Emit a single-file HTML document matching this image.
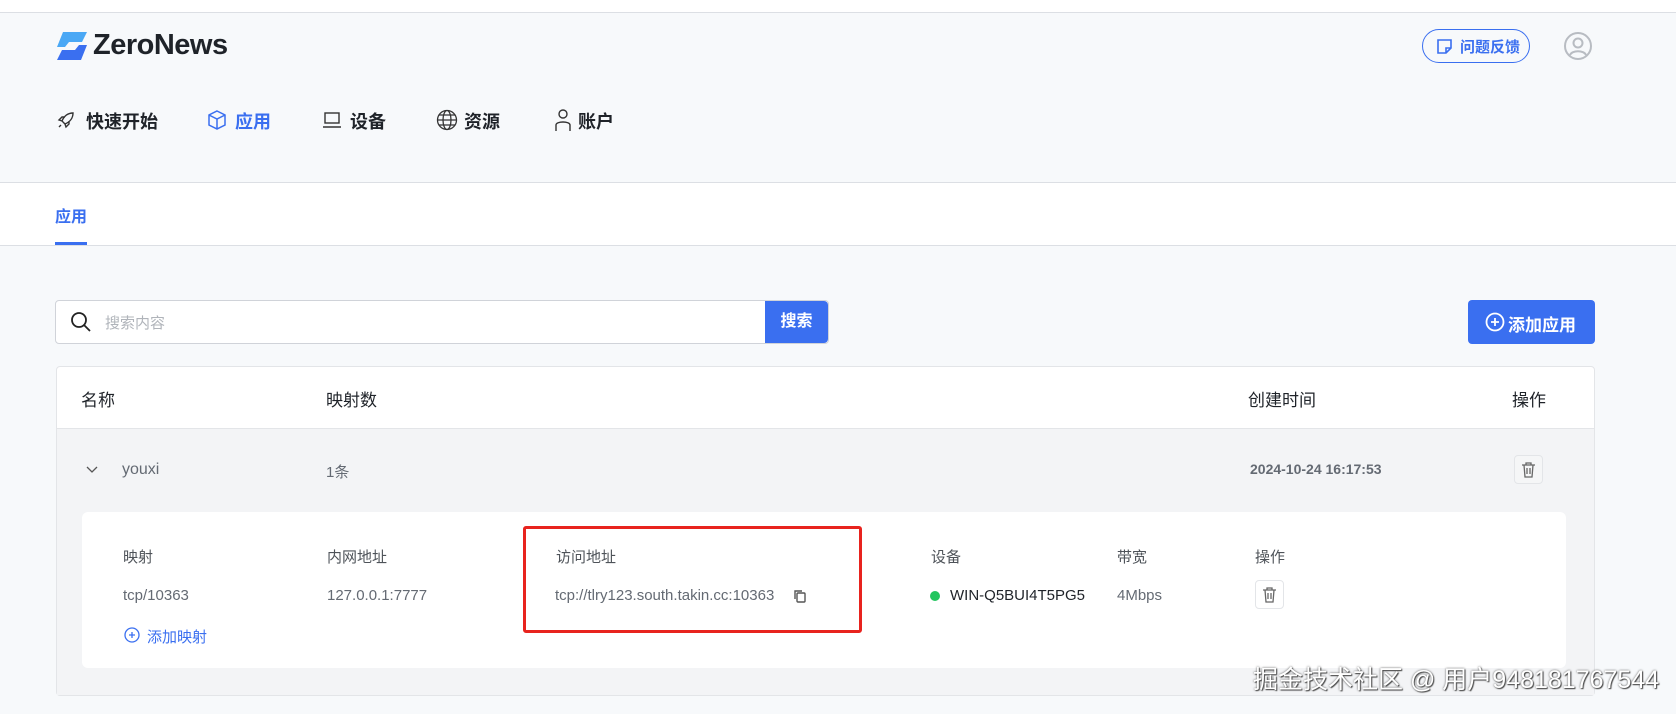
<!DOCTYPE html>
<html><head><meta charset="utf-8"><style>
*{margin:0;padding:0;box-sizing:border-box}
body{width:1676px;height:714px;overflow:hidden;background:#f7f9fb;font-family:"Liberation Sans","Noto Sans CJK SC",sans-serif;position:relative;color:#1f2329}
.a{position:absolute;white-space:nowrap}
.line{position:absolute;left:0;width:1676px;height:1px;background:#dcdfe4}
.nav{font-size:18px;font-weight:bold;top:108px;color:#1f2329}
.h{font-size:17px;color:#1f2329}
.g{font-size:15px;color:#646a73}
.ih{font-size:15px;color:#4e5359}
</style></head><body>
<div class="a" style="left:0;top:0;width:1676px;height:12px;background:#fff"></div>
<div class="line" style="top:12px"></div>
<svg class="a" style="left:55px;top:32px" width="34" height="28" viewBox="0 0 34 28">
<path d="M8 0H32L27 10H14L10 15H2Z" fill="#4aa8f5"/>
<path d="M24 13H32L26 28H2L7 18H20Z" fill="#3a6ff0"/>
</svg>
<div class="a" style="left:93px;top:29px;font-size:29px;font-weight:bold;color:#1f2329;letter-spacing:-0.5px">ZeroNews</div>
<div class="a" style="left:1422px;top:29px;width:108px;height:34px;border:1px solid #3a6ff0;border-radius:17px"></div>
<svg class="a" style="left:1436px;top:38px" width="17" height="17" viewBox="0 0 17 17" fill="none" stroke="#3a6ff0" stroke-width="1.6"><path d="M2 2H15V10L10 15H2Z M15 10H10V15"/></svg>
<div class="a" style="left:1460px;top:36px;font-size:15px;color:#3a6ff0;font-weight:bold">问题反馈</div>
<svg class="a" style="left:1563px;top:31px" width="30" height="30" viewBox="0 0 30 30" fill="none" stroke="#b8bcc2" stroke-width="2"><circle cx="15" cy="15" r="13"/><circle cx="15" cy="12" r="4.5"/><path d="M7 24C9 19 21 19 23 24"/></svg>
<svg class="a" style="left:56px;top:110px" width="20" height="20" viewBox="0 0 20 20" fill="none" stroke="#333" stroke-width="1.4"><path d="M17 3C12 3 8 6 6 11L9 14C14 12 17 8 17 3Z M6 11L3 10L6 7H9 M9 14L10 17L13 14V11 M5 15L3 17"/></svg>
<div class="a nav" style="left:86px">快速开始</div>
<svg class="a" style="left:207px;top:109px" width="20" height="22" viewBox="0 0 20 22" fill="none" stroke="#3a6ff0" stroke-width="1.5"><path d="M10 2L18 6V16L10 20L2 16V6Z M2 6L10 10L18 6 M10 10V20"/></svg>
<div class="a nav" style="left:235px;color:#3a6ff0">应用</div>
<svg class="a" style="left:322px;top:111px" width="20" height="18" viewBox="0 0 20 18" fill="none" stroke="#333" stroke-width="1.4"><rect x="3" y="2" width="14" height="10"/><path d="M1 16H19"/></svg>
<div class="a nav" style="left:350px">设备</div>
<svg class="a" style="left:436px;top:109px" width="22" height="22" viewBox="0 0 22 22" fill="none" stroke="#333" stroke-width="1.3"><circle cx="11" cy="11" r="9.5"/><ellipse cx="11" cy="11" rx="4" ry="9.5"/><path d="M1.5 11H20.5 M3 6H19 M3 16H19"/></svg>
<div class="a nav" style="left:464px">资源</div>
<svg class="a" style="left:554px;top:108px" width="18" height="24" viewBox="0 0 18 24" fill="none" stroke="#333" stroke-width="1.4"><circle cx="9" cy="6" r="4"/><path d="M2 23V17C2 13 16 13 16 17V23"/></svg>
<div class="a nav" style="left:578px">账户</div>
<div class="line" style="top:182px"></div>
<div class="a" style="left:0;top:183px;width:1676px;height:62px;background:#fff"></div>
<div class="a" style="left:55px;top:203px;font-size:16px;color:#3a6ff0;font-weight:bold">应用</div>
<div class="a" style="left:55px;top:242px;width:32px;height:3px;background:#3a6ff0"></div>
<div class="line" style="top:245px"></div>
<div class="a" style="left:55px;top:300px;width:774px;height:44px;background:#fff;border:1px solid #d0d3d9;border-radius:4px"></div>
<svg class="a" style="left:70px;top:311px" width="22" height="22" viewBox="0 0 22 22" fill="none" stroke="#222" stroke-width="1.8"><circle cx="9" cy="9" r="7"/><path d="M14 14L20 20"/></svg>
<div class="a" style="left:105px;top:312px;font-size:15px;color:#b0b4ba">搜索内容</div>
<div class="a" style="left:765px;top:301px;width:63px;height:42px;background:#3a6ff0;border-radius:0 4px 4px 0;color:#fff;font-size:16px;font-weight:bold;text-align:center;line-height:42px">搜索</div>
<div class="a" style="left:1468px;top:300px;width:127px;height:44px;background:#3a6ff0;border-radius:4px"></div>
<svg class="a" style="left:1485px;top:312px" width="20" height="20" viewBox="0 0 20 20" fill="none" stroke="#fff" stroke-width="1.8"><circle cx="10" cy="10" r="8.5"/><path d="M10 6V14 M6 10H14"/></svg>
<div class="a" style="left:1508px;top:311px;font-size:17px;font-weight:bold;color:#fff">添加应用</div>
<div class="a" style="left:56px;top:366px;width:1539px;height:330px;background:#fff;border:1px solid #e3e5e8;border-radius:4px"></div>
<div class="a" style="left:57px;top:428px;width:1537px;height:1px;background:#e3e5e8"></div>
<div class="a" style="left:57px;top:429px;width:1537px;height:266px;background:#f3f4f6"></div>
<div class="a h" style="left:81px;top:386px">名称</div>
<div class="a h" style="left:326px;top:386px">映射数</div>
<div class="a h" style="left:1248px;top:386px">创建时间</div>
<div class="a h" style="left:1512px;top:386px">操作</div>
<svg class="a" style="left:85px;top:465px" width="14" height="10" viewBox="0 0 14 10" fill="none" stroke="#555" stroke-width="1.3"><path d="M2 2L7 7L12 2"/></svg>
<div class="a g" style="left:122px;top:461px;font-size:16px">youxi</div>
<div class="a g" style="left:326px;top:461px">1条</div>
<div class="a g" style="left:1250px;top:461px;font-weight:bold;font-size:14px">2024-10-24 16:17:53</div>
<div class="a" style="left:1514px;top:455px;width:29px;height:29px;border:1px solid #e3e5e8;border-radius:4px;background:#f5f6f7"></div>
<svg class="a" style="left:1521px;top:462px" width="15" height="16" viewBox="0 0 15 16" fill="none" stroke="#666" stroke-width="1.3"><path d="M1 3H14 M5 3V1H10V3 M3 3L4 15H11L12 3 M6 6V12 M9 6V12"/></svg>
<div class="a" style="left:82px;top:512px;width:1484px;height:156px;background:#fff;border-radius:6px"></div>
<div class="a ih" style="left:123px;top:546px">映射</div>
<div class="a ih" style="left:327px;top:546px">内网地址</div>
<div class="a ih" style="left:556px;top:546px">访问地址</div>
<div class="a ih" style="left:931px;top:546px">设备</div>
<div class="a ih" style="left:1117px;top:546px">带宽</div>
<div class="a ih" style="left:1255px;top:546px">操作</div>
<div class="a g" style="left:123px;top:587px">tcp/10363</div>
<div class="a g" style="left:327px;top:587px">127.0.0.1:7777</div>
<div class="a g" style="left:555px;top:587px">tcp://tlry123.south.takin.cc:10363</div>
<svg class="a" style="left:793px;top:589px" width="14" height="15" viewBox="0 0 14 15" fill="none" stroke="#555" stroke-width="1.4"><rect x="4" y="4" width="8" height="9" rx="1"/><path d="M2 10V2H9"/></svg>
<div class="a" style="left:930px;top:591px;width:10px;height:10px;border-radius:50%;background:#22c55e"></div>
<div class="a" style="left:950px;top:587px;font-size:15px;color:#1f2329">WIN-Q5BUI4T5PG5</div>
<div class="a g" style="left:1117px;top:587px">4Mbps</div>
<div class="a" style="left:1255px;top:580px;width:29px;height:29px;border:1px solid #e3e5e8;border-radius:4px;background:#fff"></div>
<svg class="a" style="left:1262px;top:587px" width="15" height="16" viewBox="0 0 15 16" fill="none" stroke="#666" stroke-width="1.3"><path d="M1 3H14 M5 3V1H10V3 M3 3L4 15H11L12 3 M6 6V12 M9 6V12"/></svg>
<svg class="a" style="left:124px;top:627px" width="16" height="16" viewBox="0 0 16 16" fill="none" stroke="#3a6ff0" stroke-width="1.3"><circle cx="8" cy="8" r="7"/><path d="M8 5V11 M5 8H11"/></svg>
<div class="a" style="left:147px;top:626px;font-size:15px;color:#3a6ff0">添加映射</div>
<div class="a" style="left:523px;top:526px;width:339px;height:107px;border:3px solid #e8231e;border-radius:3px"></div>
<div class="a" style="left:1253px;top:660px;font-size:25px;color:#fff;text-shadow:0 0 2px #555,1px 1px 1px #444">掘金技术社区 @ 用户948181767544</div>
</body></html>
